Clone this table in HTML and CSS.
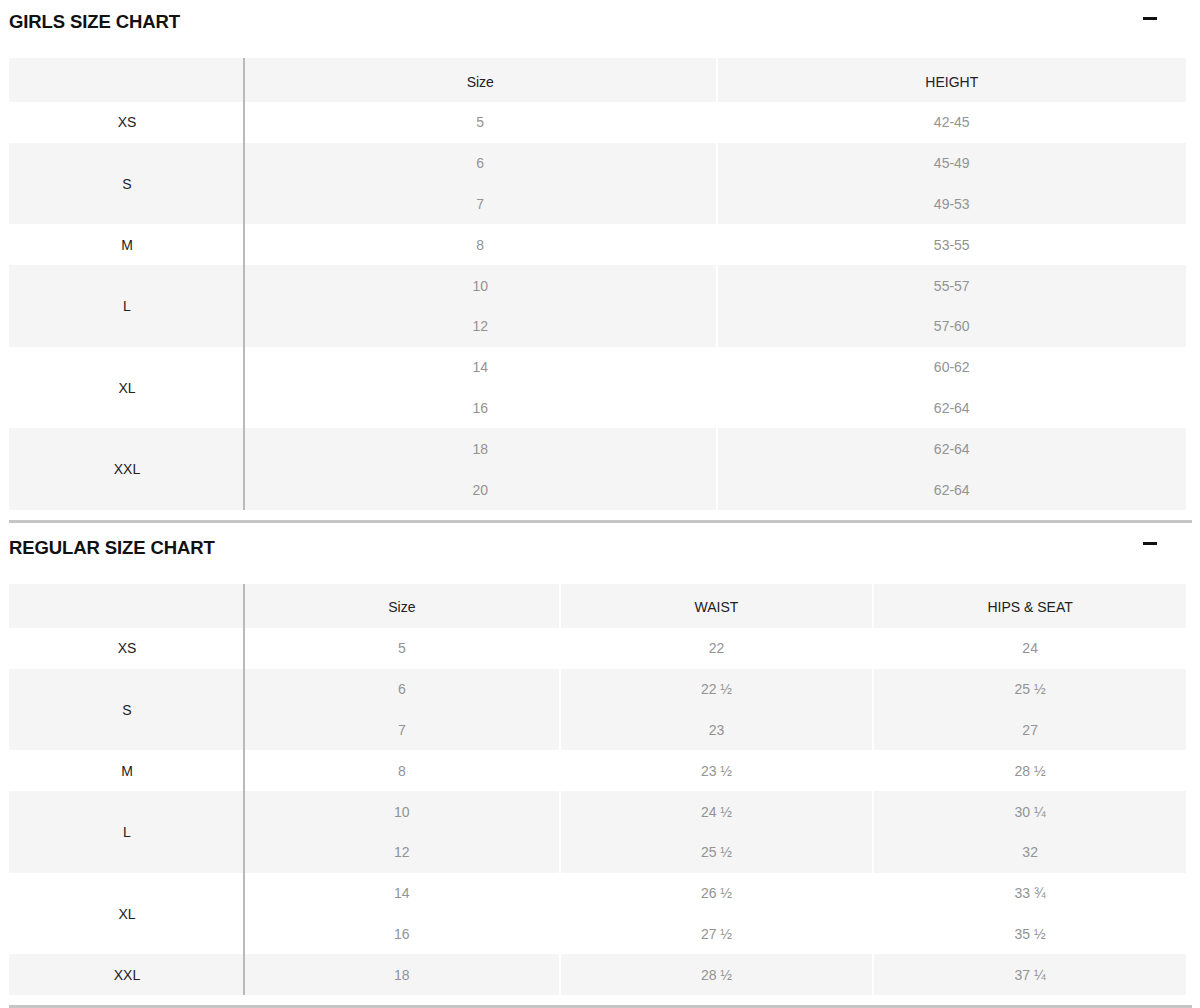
FILE: index.html
```html
<!DOCTYPE html>
<html>
<head>
<meta charset="utf-8">
<title>Size Charts</title>
<link rel="stylesheet" href="styles.css">
</head>
<body>
<section class="chart">
  <div class="chart-head">
    <h2 class="chart-title">GIRLS SIZE CHART</h2>
    <span class="toggle" aria-label="collapse"></span>
  </div>
  <table class="size-table two">
    <thead>
      <tr><th class="label"></th><th>Size</th><th>HEIGHT</th></tr>
    </thead>
    <tbody class="white">
      <tr><td class="label">XS</td><td>5</td><td>42-45</td></tr>
    </tbody>
    <tbody class="gray">
      <tr><td class="label" rowspan="2">S</td><td>6</td><td>45-49</td></tr>
      <tr><td>7</td><td>49-53</td></tr>
    </tbody>
    <tbody class="white">
      <tr><td class="label">M</td><td>8</td><td>53-55</td></tr>
    </tbody>
    <tbody class="gray">
      <tr><td class="label" rowspan="2">L</td><td>10</td><td>55-57</td></tr>
      <tr><td>12</td><td>57-60</td></tr>
    </tbody>
    <tbody class="white">
      <tr><td class="label" rowspan="2">XL</td><td>14</td><td>60-62</td></tr>
      <tr><td>16</td><td>62-64</td></tr>
    </tbody>
    <tbody class="gray">
      <tr><td class="label" rowspan="2">XXL</td><td>18</td><td>62-64</td></tr>
      <tr><td>20</td><td>62-64</td></tr>
    </tbody>
  </table>
</section>
<section class="chart">
  <div class="chart-head">
    <h2 class="chart-title">REGULAR SIZE CHART</h2>
    <span class="toggle" aria-label="collapse"></span>
  </div>
  <table class="size-table three">
    <thead>
      <tr><th class="label"></th><th>Size</th><th>WAIST</th><th>HIPS &amp; SEAT</th></tr>
    </thead>
    <tbody class="white">
      <tr><td class="label">XS</td><td>5</td><td>22</td><td>24</td></tr>
    </tbody>
    <tbody class="gray">
      <tr><td class="label" rowspan="2">S</td><td>6</td><td>22 ½</td><td>25 ½</td></tr>
      <tr><td>7</td><td>23</td><td>27</td></tr>
    </tbody>
    <tbody class="white">
      <tr><td class="label">M</td><td>8</td><td>23 ½</td><td>28 ½</td></tr>
    </tbody>
    <tbody class="gray">
      <tr><td class="label" rowspan="2">L</td><td>10</td><td>24 ½</td><td>30 ¼</td></tr>
      <tr><td>12</td><td>25 ½</td><td>32</td></tr>
    </tbody>
    <tbody class="white">
      <tr><td class="label" rowspan="2">XL</td><td>14</td><td>26 ½</td><td>33 ¾</td></tr>
      <tr><td>16</td><td>27 ½</td><td>35 ½</td></tr>
    </tbody>
    <tbody class="gray">
      <tr><td class="label">XXL</td><td>18</td><td>28 ½</td><td>37 ¼</td></tr>
    </tbody>
  </table>
</section>
</body>
</html>
```
FILE: styles.css
```css
html, body {
  margin: 0;
  padding: 0;
  background: #ffffff;
}
body {
  padding: 0 8px 0 9px;
  font-family: "Liberation Sans", Arial, Helvetica, sans-serif;
  color: #222222;
}
.chart {
  border-bottom: 3px solid #c6c6c6;
  padding-bottom: 10px;
  margin-bottom: 3px;
}
.chart-head {
  height: 42px;
  margin-bottom: 16px;
  display: flex;
  align-items: center;
  justify-content: space-between;
  padding-right: 35px;
}
.chart-title {
  margin: 0;
  padding-top: 2px;
  font-size: 18.5px;
  font-weight: bold;
  color: #111111;
  letter-spacing: -0.1px;
}
.toggle {
  display: block;
  width: 14px;
  height: 3px;
  background: #111111;
  margin-bottom: 6px;
}
.size-table {
  width: calc(100% - 6px);
  border-collapse: separate;
  border-spacing: 0;
  table-layout: fixed;
  font-size: 14px;
}
.size-table th,
.size-table td {
  text-align: center;
  vertical-align: middle;
  padding: 0;
  height: 40.8px;
  font-weight: normal;
  border-left: 2px solid #ffffff;
}
.size-table thead th {
  height: 44px;
  padding-top: 3px;
  box-sizing: border-box;
  background: #f5f5f5;
  color: #222222;
}
.size-table td {
  color: #939393;
}
.size-table .label {
  width: 236px;
  box-sizing: border-box;
  border-left: 0;
  border-right: 2px solid #b9b9b9;
  padding-left: 2px;
  color: #222222;
}
.size-table .label + th,
.size-table .label + td,
.size-table tr > td:first-child:not(.label) {
  border-left: 0;
}
.size-table tbody.gray td {
  background: #f5f5f5;
}
.size-table tbody.white td {
  background: #ffffff;
}
```
